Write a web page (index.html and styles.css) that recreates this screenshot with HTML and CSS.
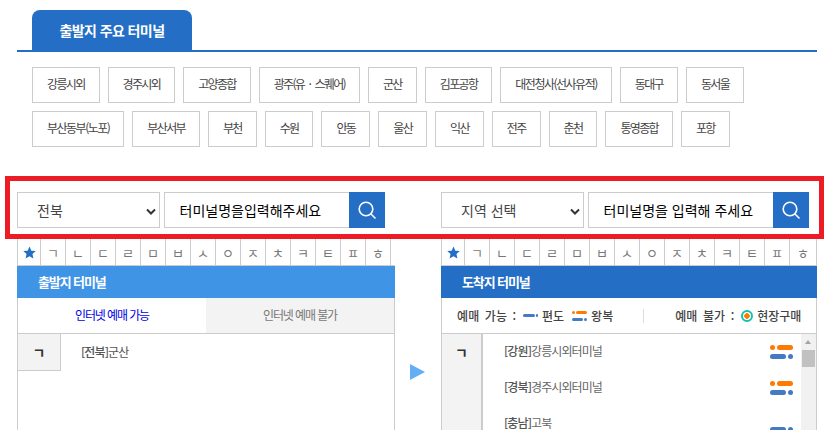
FILE: index.html
```html
<!DOCTYPE html>
<html lang="ko">
<head>
<meta charset="utf-8">
<title>출발지 주요 터미널</title>
<link rel="stylesheet" href="styles.css">
</head>
<body>
<main class="page">
  <div class="tabbar"><h2 class="tab">출발지 주요 터미널</h2></div>
  <div class="chips">
    <div class="chip-row">
      <a class="chip">강릉시외</a><a class="chip">경주시외</a><a class="chip">고양종합</a><a class="chip chip-dot">광주(유 · 스퀘어)</a><a class="chip">군산</a><a class="chip">김포공항</a><a class="chip chip-long">대전청사(선사유적)</a><a class="chip">동대구</a><a class="chip">동서울</a>
    </div>
    <div class="chip-row">
      <a class="chip chip-long">부산동부(노포)</a><a class="chip">부산서부</a><a class="chip">부천</a><a class="chip">수원</a><a class="chip">안동</a><a class="chip">울산</a><a class="chip">익산</a><a class="chip">전주</a><a class="chip">춘천</a><a class="chip">통영종합</a><a class="chip">포항</a>
    </div>
  </div>

  <section class="search">
    <div class="search-group">
      <select class="region"><option>전북</option></select>
      <input class="keyword" type="text" placeholder="터미널명을입력해주세요">
      <button class="go" type="button" aria-label="검색"><svg viewBox="0 0 20 20" width="20" height="20"><circle cx="9" cy="9" r="6.8" fill="none" stroke="#fff" stroke-width="1.6"/><path d="M14 14l4 4" stroke="#fff" stroke-width="1.6" stroke-linecap="round"/></svg></button>
    </div>
    <div class="search-group">
      <select class="region"><option>지역 선택</option></select>
      <input class="keyword" type="text" placeholder="터미널명을 입력해 주세요">
      <button class="go" type="button" aria-label="검색"><svg viewBox="0 0 20 20" width="20" height="20"><circle cx="9" cy="9" r="6.8" fill="none" stroke="#fff" stroke-width="1.6"/><path d="M14 14l4 4" stroke="#fff" stroke-width="1.6" stroke-linecap="round"/></svg></button>
    </div>
  </section>

  <div class="columns">
    <section class="col col-left">
      <ul class="jamo">
        <li><svg viewBox="0 0 14 14" width="13" height="13"><path d="M7 .6l2 4.400 4.700.5-3.500 3.200 1 4.700L7 11l-4.200 2.400 1-4.700L.3 5.500l4.700-.5z" fill="#246fc5"/></svg></li><li>ㄱ</li><li>ㄴ</li><li>ㄷ</li><li>ㄹ</li><li>ㅁ</li><li>ㅂ</li><li>ㅅ</li><li>ㅇ</li><li>ㅈ</li><li>ㅊ</li><li>ㅋ</li><li>ㅌ</li><li>ㅍ</li><li>ㅎ</li>
      </ul>
      <div class="panel">
        <h3 class="panel-head head-light">출발지 터미널</h3>
        <div class="sale-tabs">
          <a class="sale-tab on">인터넷 예매 가능</a>
          <a class="sale-tab">인터넷 예매 불가</a>
        </div>
        <div class="dep-list">
          <div class="initial initial-box">ㄱ</div>
          <div class="dep-name"><b class="area">[전북]</b>군산</div>
        </div>
      </div>
    </section>

    <div class="arrow-col"><span class="arrow"></span></div>

    <section class="col col-right">
      <ul class="jamo">
        <li><svg viewBox="0 0 14 14" width="13" height="13"><path d="M7 .6l2 4.400 4.700.5-3.500 3.200 1 4.700L7 11l-4.200 2.400 1-4.700L.3 5.500l4.700-.5z" fill="#246fc5"/></svg></li><li>ㄱ</li><li>ㄴ</li><li>ㄷ</li><li>ㄹ</li><li>ㅁ</li><li>ㅂ</li><li>ㅅ</li><li>ㅇ</li><li>ㅈ</li><li>ㅊ</li><li>ㅋ</li><li>ㅌ</li><li>ㅍ</li><li>ㅎ</li>
      </ul>
      <div class="panel">
        <h3 class="panel-head head-dark">도착지 터미널</h3>
        <div class="legend">
          <span class="legend-label">예매 가능 :</span>
          <span class="oneway-mini"><i class="p"></i><i class="d"></i></span><span class="legend-name name-oneway">편도</span>
          <span class="round-mini"><span class="mini-row"><i class="d o"></i><i class="p o"></i></span><span class="mini-row"><i class="p"></i><i class="d"></i></span></span><span class="legend-name">왕복</span>
          <span class="legend-sep"></span>
          <span class="legend-label">예매 불가 :</span>
          <span class="onsite"></span><span class="legend-name">현장구매</span>
        </div>
        <div class="arr-list">
          <div class="initial-col">ㄱ</div>
          <div class="rows">
            <div class="row"><span><b class="area">[강원]</b>강릉시외터미널</span><span class="marks"><span class="mark"><i class="dot o"></i><i class="pill o"></i></span><span class="mark"><i class="pill"></i><i class="dot"></i></span></span></div>
            <div class="row"><span><b class="area">[경북]</b>경주시외터미널</span><span class="marks"><span class="mark"><i class="dot o"></i><i class="pill o"></i></span><span class="mark"><i class="pill"></i><i class="dot"></i></span></span></div>
            <div class="row"><span><b class="area">[충남]</b>고북</span><span class="marks marks-single"><span class="mark"><i class="pill"></i><i class="dot"></i></span></span></div>
          </div>
          <div class="scroll"><span class="scroll-up"></span><span class="scroll-thumb"></span></div>
        </div>
      </div>
    </section>
  </div>
</main>
</body>
</html>
```
FILE: styles.css
```css
* { box-sizing: border-box; }
html, body { margin: 0; padding: 0; height: 430px; overflow: hidden; background: #fff; }
body { font-family: "Noto Sans CJK KR", "Noto Sans", sans-serif; color: #444; }
ul { list-style: none; margin: 0; padding: 0; }
h2, h3 { margin: 0; }
.page { width: 833px; height: 430px; padding-top: 10px; overflow: hidden; }

.tabbar { margin: 0 16px 0 17px; height: 42px; border-bottom: 2px solid #246fc5; padding-left: 15px; }
.tab { width: 160px; height: 40px; background: #246fc5; color: #fff; border-radius: 8px 8px 0 0;
  font-size: 14px; font-weight: 700; line-height: 40px; text-align: center; letter-spacing: -.6px; }

.chips { padding: 15px 0 0 32px; display: flex; flex-direction: column; gap: 8px; }
.chip-row { display: flex; gap: 8px; }
.chip { height: 36px; line-height: 32px; padding: 0 14px; border: 1px solid #ccc; font-size: 12px;
  letter-spacing: -1.650px; color: #444; white-space: nowrap; }
.chip-dot { word-spacing: 2.500px; }
.chip-long { letter-spacing: -1.500px; }

.search { margin: 29px 9px 0 5px; height: 63px; border: 5px solid #ed1c24; padding: 11px 10px 6px 7px;
  display: flex; gap: 56px; }
.search-group { display: flex; width: 368px; height: 36px; }
.region { width: 143px; height: 36px; margin-right: 4px; padding-left: 19px; border: 1px solid #ccc; border-radius: 0;
  appearance: none; font: 400 14px "Noto Sans CJK KR", sans-serif; color: #444;
  background: #fff url("data:image/svg+xml,%3Csvg xmlns='http://www.w3.org/2000/svg' width='10' height='7'%3E%3Cpath d='M1 1.500l4 4 4-4' fill='none' stroke='%23333' stroke-width='2'/%3E%3C/svg%3E") no-repeat 128px 15px; }
.keyword { width: 185px; height: 36px; border: 1px solid #ccc; border-right: 0; padding: 0 0 0 14.500px;
  font: 400 14px "Noto Sans CJK KR", sans-serif; color: #000; outline: 0; }
.keyword::placeholder { color: #000; opacity: 1; }
.go { width: 36px; height: 36px; border: 0; padding: 0; background: #246fc5; display: flex; align-items: center; justify-content: center; }

.columns { display: flex; margin-left: 17px; }
.col-left { width: 378px; }
.col-right { width: 376px; }
.arrow-col { width: 46px; padding: 125px 0 0 15px; }
.arrow { display: block; width: 0; height: 0; border-left: 15px solid #64aef5; border-top: 8px solid transparent; border-bottom: 8px solid transparent; }

.jamo { display: flex; height: 27px; border-bottom: 1px solid #ccc; }
.jamo li { width: 25px; height: 26px; border-right: 1px solid #ccc; display: flex; align-items: center; justify-content: center;
  font-size: 13px; color: #777; }
.jamo li:first-child { width: 24px; border-left: 1px solid #ccc; }
.col-right .jamo li:last-child { width: 27px; }

.panel { height: 170px; border: 1px solid #ccc; border-top: 0; }
.panel-head { height: 32px; margin: 0 -1px; font-size: 13px; font-weight: 700; color: #fff; line-height: 32px; padding-left: 21px; letter-spacing: -1.100px; }
.head-light { background: #4094e6; }
.head-dark { background: #246fc5; }

.sale-tabs { display: flex; height: 36px; border-bottom: 1px solid #ccc; }
.sale-tab { flex: 1; height: 35px; line-height: 34px; text-align: center; font-size: 12px; letter-spacing: -1.100px; color: #777; background: #f3f3f3; }
.sale-tab.on { color: #0000e6; background: #fff; }

.area { font-weight: 500; color: #555; }
.dep-list { display: flex; }
.initial { width: 43px; height: 37px; background: #f3f3f3; border: solid #ccc; border-width: 0 1px 1px 0; text-align: center;
  font-size: 14px; font-weight: 700; line-height: 36px; color: #333; }
.dep-name { padding: 8px 0 0 20px; font-size: 12px; letter-spacing: -.9px; line-height: 20px; color: #555; }

.legend { height: 36px; border-bottom: 1px solid #ccc; display: flex; align-items: center; padding-left: 15px; font-size: 12px; color: #444; font-weight: 500; }
.legend-label { width: 66px; white-space: pre; word-spacing: 2px; letter-spacing: .1px; }
.legend-name { letter-spacing: 0; }
.name-oneway { margin-right: 8px; }
.oneway-mini { display: flex; align-items: center; gap: 1px; margin-right: 4px; }
.oneway-mini .p { width: 12px; height: 3px; border-radius: 2px; background: #4479c4; }
.oneway-mini .d { width: 2px; height: 3px; background: #4479c4; border-radius: 1px; }
.round-mini { display: flex; flex-direction: column; gap: 4px; margin-right: 4px; }
.mini-row { display: flex; gap: 1px; width: 15px; }
.mini-row .p { flex: 1; height: 3px; border-radius: 2px; background: #4479c4; }
.mini-row .d { width: 3px; height: 3px; border-radius: 50%; background: #4479c4; }
.mini-row .o { background: #ff7a00; }
.legend-sep { width: 1px; height: 14px; background: #ddd; margin: 0 31px 0 30px; }
.onsite { width: 12px; height: 12px; border: 2px solid #14c0b4; border-radius: 50%; background: radial-gradient(circle, #ff7a00 0 2.500px, #fff 3px); margin-right: 4px; }

.arr-list { display: flex; height: 96px; }
.initial-col { width: 41px; flex: none; background: #f3f3f3; border-right: 2px solid #ccc; text-align: center; font-size: 14px; font-weight: 700; color: #333; line-height: 36px; }
.rows { flex: 1; padding-top: 0; }
.row { height: 36px; display: flex; justify-content: space-between; padding: 5px 8px 0 21px; font-size: 12px; letter-spacing: -.9px; line-height: 24px; color: #666; }
.marks { display: flex; flex-direction: column; gap: 4px; padding-top: 6px; }
.marks-single { padding-top: 0; margin-top: 16px; }
.mark { display: flex; gap: 2px; width: 23px; }
.pill { flex: 1; height: 5px; border-radius: 3px; background: #4479c4; }
.dot { width: 5px; height: 5px; border-radius: 50%; background: #4479c4; }
.pill.o, .dot.o { background: #ff7a00; }

.scroll { width: 15px; flex: none; background: #f1f1f1; padding-top: 16px; position: relative; }
.scroll-up { position: absolute; top: 6px; left: 4px; width: 0; height: 0; border-left: 3.500px solid transparent; border-right: 3.500px solid transparent; border-bottom: 4px solid #a3a3a3; }
.scroll-thumb { display: block; width: 13px; height: 17px; margin-left: 1px; background: #c1c1c1; }
```
